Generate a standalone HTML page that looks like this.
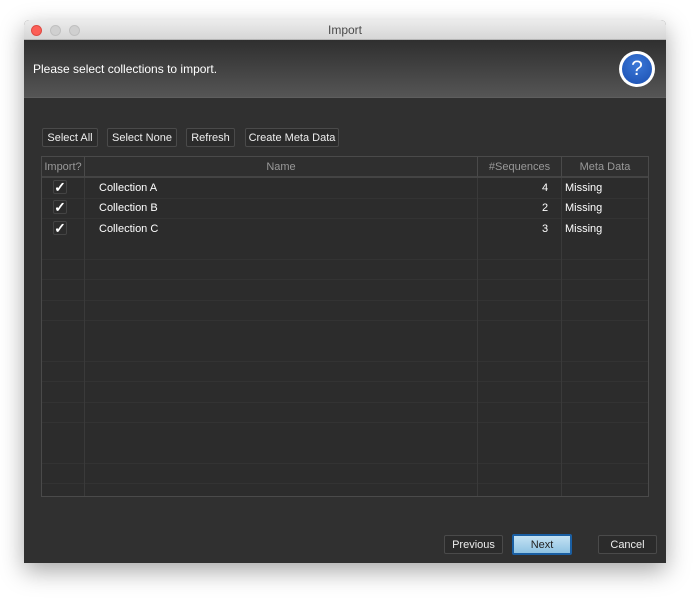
<!DOCTYPE html>
<html><head><style>
*{box-sizing:border-box;margin:0;padding:0}
body{width:696px;height:598px;background:#fff;font-family:"Liberation Sans",sans-serif;position:relative;overflow:hidden}
.win{position:absolute;left:24px;top:20px;width:642px;height:543px;background:#303030;box-shadow:0 8px 24px rgba(0,0,0,.35);border-radius:5px 5px 0 0;overflow:hidden}
.tb{position:absolute;left:0;top:0;width:642px;height:20px;background:linear-gradient(#ececec,#d6d6d6);border-bottom:1px solid #b5b5b5;text-align:center;font-size:12px;line-height:20px;color:#4a4a4a}
.dot{position:absolute;top:5px;width:11px;height:11px;border-radius:50%;background:#d0d0d0;border:1px solid #c0c0c0}
.hd{position:absolute;left:0;top:20px;width:642px;height:58px;background:linear-gradient(#2f2f2f,#555);border-bottom:1px solid #5e5e5e}
.hd span{position:absolute;left:9px;top:22px;color:#fff;font-size:12px}
.help{position:absolute;left:595px;top:31px;width:36px;height:36px;border-radius:50%;background:#fff}
.help div{position:absolute;left:3px;top:3px;width:30px;height:30px;border-radius:50%;background:radial-gradient(circle at 50% 35%,#3b78d8,#1b4fb0);color:#fff;font-size:21px;text-align:center;line-height:30px}
.b{position:absolute;height:19px;border:1px solid #4a4a4a;background:#2b2b2b;color:#eee;font-size:11px;text-align:center;line-height:19px;border-radius:2px}
.tbl{position:absolute;left:17px;top:136px;width:608px;height:341px;border:1px solid #4a4a4a;background:#2c2c2c repeating-linear-gradient(#2c2c2c 0 20px,#3a3a3a 20px 20.4px);background-position:0 21px}
.th{position:absolute;top:0;height:21px;border-right:1px solid #4a4a4a;border-bottom:2px solid #444;background:#2f2f2f;color:#999;font-size:11px;text-align:center;line-height:20px}
.vl{position:absolute;top:21px;bottom:0;width:1px;background:#3a3a3a}
.r{position:absolute;color:#fff;font-size:11px}
.ck{position:absolute;left:11px;width:14px;height:14px;border:1px solid #444;border-radius:2px;color:#fff;font-size:14px;font-weight:bold;line-height:13px;text-align:center}
</style></head><body>
<div class="win">
<div class="tb">Import
<div class="dot" style="left:7px;background:#fc5f57;border-color:#de4a42"></div>
<div class="dot" style="left:26px"></div><div class="dot" style="left:45px"></div></div>
<div class="hd"><span>Please select collections to import.</span></div>
<div class="help"><div>?</div></div>
<div class="b" style="left:18px;top:108px;width:56px">Select All</div>
<div class="b" style="left:83px;top:108px;width:70px">Select None</div>
<div class="b" style="left:162px;top:108px;width:49px">Refresh</div>
<div class="b" style="left:221px;top:108px;width:94px">Create Meta Data</div>
<div class="tbl">
<div class="th" style="left:0;width:43px">Import?</div>
<div class="th" style="left:43px;width:393px">Name</div>
<div class="th" style="left:436px;width:84px">#Sequences</div>
<div class="th" style="left:520px;width:86px;border-right:0">Meta Data</div>
<div class="vl" style="left:42px"></div><div class="vl" style="left:435px"></div><div class="vl" style="left:519px"></div>
<div class="ck" style="top:23px">✓</div><div class="ck" style="top:43px">✓</div><div class="ck" style="top:64px">✓</div>
<div class="r" style="left:57px;top:25px">Collection A</div><div class="r" style="left:57px;top:45px">Collection B</div><div class="r" style="left:57px;top:66px">Collection C</div>
<div class="r" style="left:500px;top:25px">4</div><div class="r" style="left:500px;top:45px">2</div><div class="r" style="left:500px;top:66px">3</div>
<div class="r" style="left:523px;top:25px">Missing</div><div class="r" style="left:523px;top:45px">Missing</div><div class="r" style="left:523px;top:66px">Missing</div>
</div>
<div class="b" style="left:420px;top:515px;width:59px">Previous</div>
<div class="b" style="left:488px;top:514px;width:60px;height:21px;line-height:18px;background:linear-gradient(#c4e2f4,#8fc3e3);border:2px solid #1a5fa3;color:#222">Next</div>
<div class="b" style="left:574px;top:515px;width:59px">Cancel</div>
</div>
</body></html>
